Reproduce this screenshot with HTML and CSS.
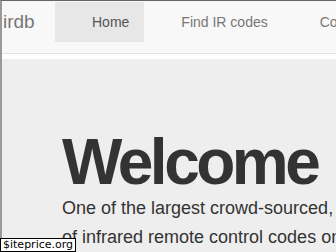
FILE: index.html
```html
<!DOCTYPE html>
<html>
<head>
<meta name="viewport" content="width=device-width, initial-scale=1">
<link rel="stylesheet" href="styles.css">
</head>
<body>

<div class="frame">
  <nav class="navbar">
    <a class="brand" href="#">irdb</a>
    <ul class="nav">
      <li class="active"><a href="#">Home</a></li>
      <li><a href="#">Find IR codes</a></li>
      <li><a href="#">Contribute</a></li>
      <li><a href="#">About</a></li>
    </ul>
  </nav>

  <div class="jumbotron">
    <h1>Welcome</h1>
    <p>One of the largest crowd-sourced, manufacturer-independent databases of infrared remote control codes on the web, and growing all the time.</p>
  </div>
</div>

<span class="stamp">$iteprice.org</span>

</body>
</html>
```

FILE: styles.css
```css
* {
  box-sizing: border-box;
}

html, body {
  margin: 0;
  height: 100%;
  overflow: hidden;
}

body {
  font-family: "Liberation Sans", Arial, sans-serif;
  color: #333;
  background: #fff;
}

.frame {
  height: 100%;
  border-top: 1px solid #666;
  border-left: 2px solid #999;
}

.navbar {
  display: flex;
  align-items: flex-start;
  height: 53px;
  padding-top: 1px;
  background-color: #f8f8f8;
  border-bottom: 1px solid #e4e4e4;
  margin-bottom: 5px;
}

.brand {
  flex-shrink: 0;
  width: 53px;
  padding-left: 1px;
  font-size: 19px;
  line-height: 40px;
  color: #777;
  text-decoration: none;
}

.nav {
  display: flex;
  list-style-type: none;
  margin: 0;
  padding: 0;
}

.nav li {
  flex-shrink: 0;
}

.nav a {
  display: block;
  padding: 0 15px 0 37px;
  font-size: 14px;
  line-height: 40px;
  color: #777;
  text-decoration: none;
  white-space: nowrap;
}

.nav .active a {
  background-color: #e7e7e7;
  color: #555;
}

.jumbotron {
  height: 100%;
  padding: 71px 0 0 60px;
  background-color: #eee;
}

.jumbotron h1 {
  margin: 0;
  font-size: 64px;
  line-height: 1;
  font-weight: bold;
  letter-spacing: -3.5px;
  color: #333;
}

.jumbotron p {
  width: 585px;
  margin: 0;
  font-size: 18px;
  line-height: 29px;
  color: #333;
}

.stamp {
  position: fixed;
  left: 0;
  bottom: 0;
  padding: 0 2px;
  border: 1px solid #000;
  background: #fff;
  color: #000;
  font-family: "DejaVu Sans", sans-serif;
  font-size: 11px;
  line-height: 12px;
}
```
